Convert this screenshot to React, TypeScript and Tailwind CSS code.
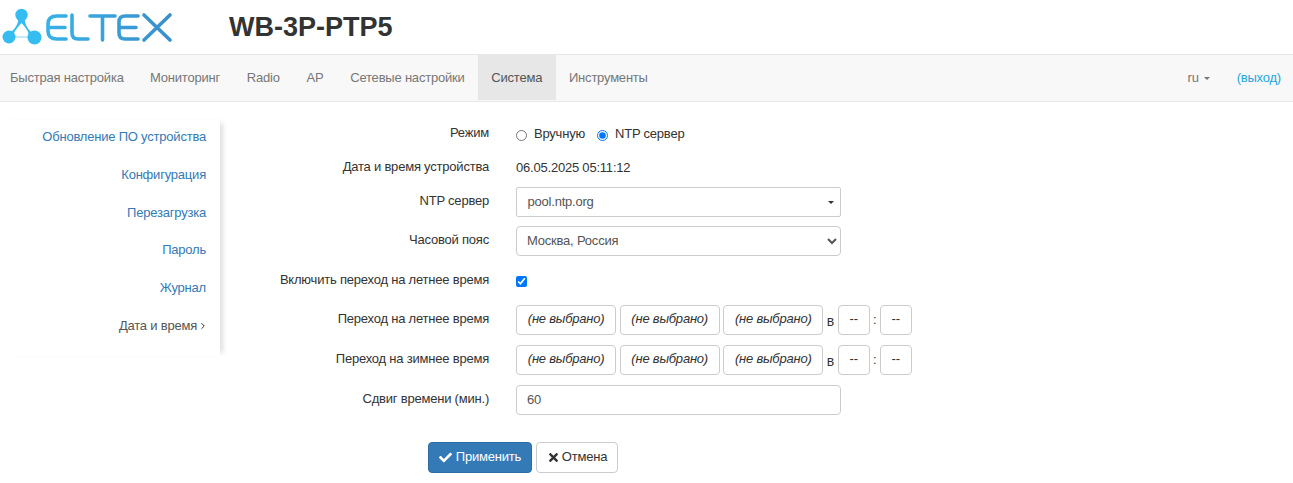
import { FaCheck, FaTimes } from 'react-icons/fa';
import { ChevronRight } from 'lucide-react';

const navItems = ['Быстрая настройка', 'Мониторинг', 'Radio', 'AP', 'Сетевые настройки', 'Система', 'Инструменты'];
const sideItems = ['Обновление ПО устройства', 'Конфигурация', 'Перезагрузка', 'Пароль', 'Журнал'];

function Logo() {
  return (
    <svg width="180" height="54" viewBox="0 0 180 54" fill="none" className="shrink-0">
      <defs>
        <linearGradient id="eltex" x1="0" y1="0" x2="180" y2="0" gradientUnits="userSpaceOnUse">
          <stop offset="0" stopColor="#35bff3" />
          <stop offset="1" stopColor="#3a8cc9" />
        </linearGradient>
      </defs>
      <g fill="#35bcf1">
        <circle cx="21.5" cy="15" r="6.2" />
        <circle cx="9" cy="37" r="6.5" />
        <circle cx="34.5" cy="37.5" r="7" />
        <path d="M18.5 19 L24.5 19 Q25.5 27 31 32 L29 35 Q28 30 21.5 23 Q15 30 13 35 L11 32 Q17.5 27 18.5 19Z" />
      </g>
      <path d="M14 37 H28" stroke="#35bcf1" strokeWidth="1" opacity="0.6" />
      <g stroke="url(#eltex)" strokeWidth="3.6" strokeLinecap="round" strokeLinejoin="round">
        <path d="M66 16 H57 Q48 16 48 24 V31 Q48 39 57 39 H66 M49 27.5 H65" />
        <path d="M72 15 V33 Q72 39 78 39 H88" />
        <path d="M90 16 H115 M102.5 16 V40" />
        <path d="M138 16 H125 Q119 16 119 22 V33 Q119 39 125 39 H138 M120 27.5 H136" />
        <path d="M144 15 L170 40 M170 15 L144 40" />
      </g>
    </svg>
  );
}

function Row({ label, top, children }: { label: string; top: string; children: React.ReactNode }) {
  return (
    <div className={`flex h-[30px] items-center ${top}`}>
      <div className="w-[269px] -translate-y-[1px] text-right leading-5 text-[#333]">{label}</div>
      <div className="ml-[27px] flex items-center">{children}</div>
    </div>
  );
}

function DateRow() {
  return (
    <>
      {[0, 1, 2].map((i) => (
        <button key={i} className="mr-[3.4px] h-[30px] w-[100.2px] rounded-[4px] border border-[#ccc] bg-white pb-[2px] text-center italic text-[#333]">
          (не выбрано)
        </button>
      ))}
      <span className="mr-1 mt-[2px] w-[7px] text-[14px] text-[#333]">в</span>
      <button className="h-[30px] w-8 rounded-[4px] border border-[#ccc] bg-white pb-[2px] text-[#333]">--</button>
      <span className="w-[10px] text-center text-[#333]">:</span>
      <button className="h-[30px] w-8 rounded-[4px] border border-[#ccc] bg-white pb-[2px] text-[#333]">--</button>
    </>
  );
}

export default function App() {
  return (
    <div className="h-[483px] overflow-hidden bg-white font-['Liberation_Sans',Arial,sans-serif] text-[13px] tracking-[-0.21px]">
      {/* Header */}
      <header className="flex h-[54px] items-center">
        <Logo />
        <h1 className="ml-[49px] text-[27px] font-bold tracking-normal text-[#333]">WB-3P-PTP5</h1>
      </header>

      {/* Nav */}
      <nav className="flex h-[48px] items-start border-y border-[#e7e7e7] bg-[#f8f8f8]">
        <div className="flex">
          {navItems.map((item, i) => (
            <a
              key={item}
              className={`h-[45px] leading-[45px] ${i === 0 ? 'pl-[10px] pr-[13px]' : 'px-[13.4px]'} ${
                item === 'Система' ? 'bg-[#e7e7e7] text-[#555]' : 'text-[#777]'
              }`}
            >
              {item}
            </a>
          ))}
        </div>
        <div className="ml-auto flex h-[45px] items-center pr-3">
          <span className="text-[#777]">ru</span>
          <span className="ml-[5px] mt-[1px] h-0 w-0 border-x-[3.5px] border-t-[3.5px] border-x-transparent border-t-[#777]" />
          <a className="ml-[27px] text-[#1ea7e1]">(выход)</a>
        </div>
      </nav>

      <div className="flex">
        {/* Sidebar */}
        <aside className="mt-[18px] h-[236px] w-[220px] shrink-0 pt-[7px] pr-[14px] text-right shadow-[6px_0_5px_-3px_rgba(0,0,0,0.13)]">
          {sideItems.map((item) => (
            <a key={item} className="block h-[37.8px] leading-5 text-[#337ab7]">
              {item}
            </a>
          ))}
          <a className="flex items-center justify-end leading-5 text-[#555]">
            Дата и время
            <ChevronRight className="ml-[1px] -mr-[2px] h-[10px] w-[10px] text-[#333]" strokeWidth={2.4} />
          </a>
        </aside>

        {/* Form */}
        <main>
          <Row label="Режим" top="mt-[17px]">
            <label className="flex items-center text-[#333]">
              <input type="radio" name="mode" className="m-0 h-[11px] w-[11px] translate-y-[1px]" />
              <span className="ml-[7px]">Вручную</span>
            </label>
            <label className="ml-3 flex items-center text-[#333]">
              <input type="radio" name="mode" defaultChecked className="m-0 h-[11px] w-[11px] translate-y-[1px]" />
              <span className="ml-[7px]">NTP сервер</span>
            </label>
          </Row>
          <Row label="Дата и время устройства" top="mt-[4px]">
            <span className="text-[#333]">06.05.2025 05:11:12</span>
          </Row>
          <Row label="NTP сервер" top="mt-[4px]">
            <div className="flex h-[30px] w-[325px] items-center rounded-[2px] border border-[#ccc] bg-white pl-[10.5px] pr-[6px] text-[#555]">
              pool.ntp.org
              <span className="ml-auto h-0 w-0 border-x-[3px] border-t-[3px] border-x-transparent border-t-[#333]" />
            </div>
          </Row>
          <Row label="Часовой пояс" top="mt-[9px]">
            <select className="h-[30px] w-[325px] rounded-[4px] border border-[#ccc] bg-white pb-[2px] pl-[6px] text-[#555]">
              <option>Москва, Россия</option>
            </select>
          </Row>
          <Row label="Включить переход на летнее время" top="mt-[10px]">
            <input type="checkbox" defaultChecked className="m-0 h-[11px] w-[11px]" />
          </Row>
          <Row label="Переход на летнее время" top="mt-[9px]">
            <DateRow />
          </Row>
          <Row label="Переход на зимнее время" top="mt-[10px]">
            <DateRow />
          </Row>
          <Row label="Сдвиг времени (мин.)" top="mt-[10px]">
            <input
              defaultValue="60"
              className="h-[30px] w-[325px] rounded-[4px] border border-[#ccc] bg-white pb-[1px] pl-[10px] pr-[11px] text-[#555]"
            />
          </Row>
          <div className="ml-[208px] mt-[27px] flex gap-1">
            <button className="flex h-[31px] w-[104px] items-center justify-center rounded-[4px] border border-[#2e6da4] bg-[#337ab7] pb-[2px] text-white">
              <FaCheck className="mr-1 translate-y-[1px] text-[13px]" />
              Применить
            </button>
            <button className="flex h-[31px] w-[82px] items-center justify-center rounded-[4px] border border-[#ccc] bg-white pb-[2px] text-[#333]">
              <FaTimes className="mr-[2px] translate-y-[1px] text-[13px]" />
              Отмена
            </button>
          </div>
        </main>
      </div>
    </div>
  );
}
